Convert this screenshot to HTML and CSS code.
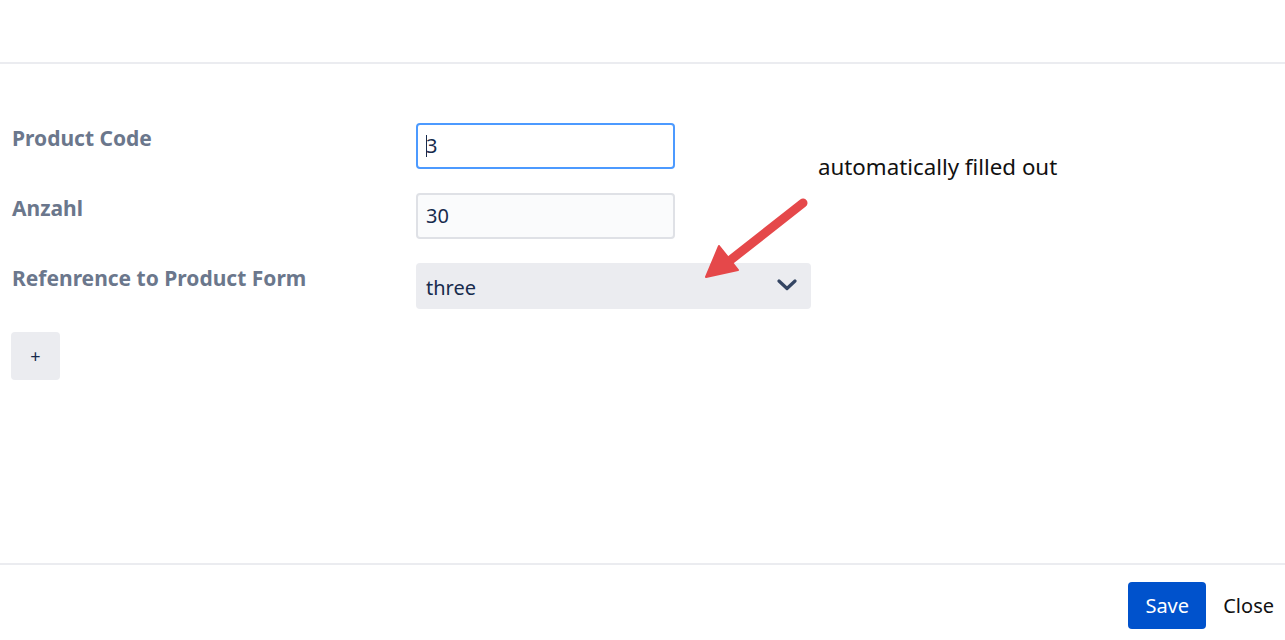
FILE: index.html
```html
<!DOCTYPE html>
<html>
<head>
<meta charset="utf-8">
<link rel="stylesheet" href="styles.css">
</head>
<body>
<div class="dialog">
  <header class="dialog-header"></header>
  <main class="dialog-body">
    <div class="form">
      <label class="label">Product Code</label>
      <div class="field"><div class="input input-focus"><span class="caret"></span>3</div></div>
      <label class="label">Anzahl</label>
      <div class="field"><div class="input">30</div></div>
      <label class="label">Refenrence to Product Form</label>
      <div class="field"><div class="select"><span>three</span>
        <svg class="chevron" width="20" height="12" viewBox="0 0 20 12"><path d="M2 2 L10 9.5 L18 2" fill="none" stroke="#344563" stroke-width="3.2" stroke-linecap="round" stroke-linejoin="round"/></svg>
      </div></div>
    </div>
    <button class="add-btn">+</button>
    <div class="note">automatically filled out</div>
    <svg class="arrow" width="130" height="110" viewBox="690 190 130 110">
      <line x1="803" y1="203" x2="728" y2="262" stroke="#e5484a" stroke-width="9" stroke-linecap="round"/>
      <polygon points="706,277 719,246 738,270" fill="#e5484a" stroke="#e5484a" stroke-width="2" stroke-linejoin="round"/>
    </svg>
  </main>
  <footer class="dialog-footer">
    <button class="btn-primary">Save</button>
    <button class="btn-link">Close</button>
  </footer>
</div>
</body>
</html>
```
FILE: styles.css
```css
html, body {
  margin: 0;
  padding: 0;
  background: #ffffff;
}
body {
  font-family: "Noto Sans", "Open Sans", "Liberation Sans", sans-serif;
  color: #172b4d;
}
.dialog {
  width: 1285px;
  height: 640px;
  display: flex;
  flex-direction: column;
}
.dialog-header {
  height: 62px;
  border-bottom: 2px solid #ebecf0;
  flex: none;
}
.dialog-body {
  position: relative;
  height: 499px;
  flex: none;
  padding: 59px 0 0 11px;
  box-sizing: border-box;
}
.form {
  display: grid;
  grid-template-columns: 405px 395px;
  grid-auto-rows: 46px;
  row-gap: 24px;
}
.label {
  font-weight: 700;
  font-size: 21px;
  color: #6b778c;
  padding: 1px 0 0 1px;
  line-height: 28px;
  letter-spacing: 0;
}
.field {
  display: flex;
}
.input {
  width: 259px;
  height: 46px;
  box-sizing: border-box;
  border: 2px solid #dfe1e6;
  border-radius: 4px;
  background: #fafbfc;
  font-size: 20px;
  line-height: 42px;
  padding-left: 8px;
  color: #172b4d;
  position: relative;
}
.input-focus {
  border-color: #4c9aff;
  background: #ffffff;
}
.caret {
  display: inline-block;
  width: 1px;
  height: 22px;
  background: #172b4d;
  vertical-align: -4px;
  margin-right: -1px;
}
.select {
  width: 395px;
  height: 46px;
  box-sizing: border-box;
  background: #ebecf0;
  border-radius: 4px;
  display: flex;
  align-items: center;
  justify-content: space-between;
  padding: 2px 14px 0 10px;
  font-size: 20px;
  color: #172b4d;
}
.chevron {
  margin-top: -4px;
}
.add-btn {
  margin-top: 23px;
  width: 49px;
  height: 48px;
  border: none;
  border-radius: 4px;
  background: #ebecf0;
  color: #172b4d;
  font-family: "Noto Sans", sans-serif;
  font-size: 18px;
  padding: 0;
  display: block;
  margin-left: 0;
}
.note {
  position: absolute;
  left: 818px;
  top: 87px;
  font-family: "Noto Sans", "Open Sans", sans-serif;
  font-size: 22.3px;
  color: #111111;
  letter-spacing: 0;
}
.arrow {
  position: absolute;
  left: 690px;
  top: 126px;
}
.dialog-footer {
  border-top: 2px solid #ebecf0;
  flex: 1;
  display: flex;
  justify-content: flex-end;
  align-items: flex-start;
  padding: 17px 11px 0 0;
  gap: 17px;
}
.btn-primary {
  background: #0052cc;
  color: #ffffff;
  border: none;
  border-radius: 4px;
  width: 78px;
  height: 47px;
  font-family: "Noto Sans", sans-serif;
  font-size: 20px;
  padding: 0;
}
.btn-link {
  background: none;
  border: none;
  color: #111111;
  font-family: "Noto Sans", sans-serif;
  font-size: 20px;
  padding: 0;
  height: 47px;
}
```
